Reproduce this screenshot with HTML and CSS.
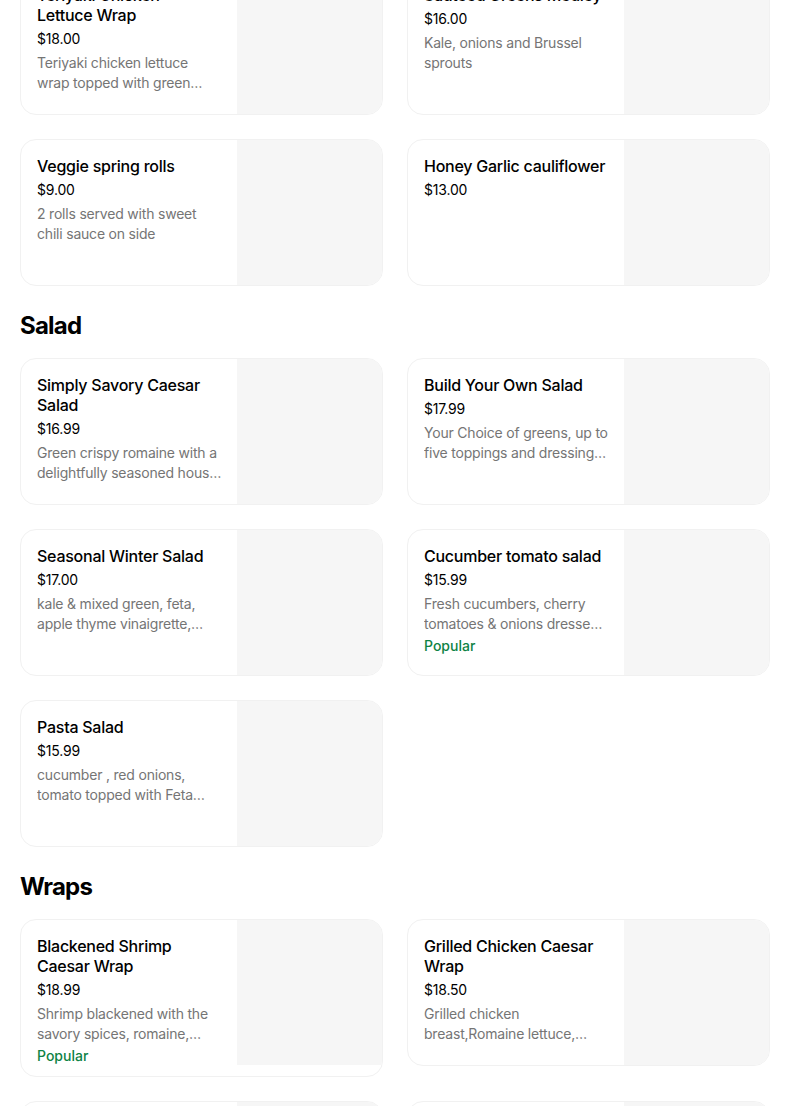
FILE: index.html
```html
<!DOCTYPE html>
<html lang="en">
<head>
<meta charset="utf-8">
<title>Menu</title>
<link rel="stylesheet" href="styles.css">
</head>
<body>
<main class="menu">
  <section class="section section-first">
    <div class="grid">
      <article class="card">
        <div class="info">
          <h3 class="title">Teriyaki Chicken Lettuce&nbsp;Wrap</h3>
          <div class="price">$18.00</div>
          <p class="desc">Teriyaki chicken lettuce wrap topped with green onions and sesame seeds</p>
        </div>
        <div class="thumb"></div>
      </article>
      <article class="card">
        <div class="info">
          <h3 class="title">Sauteed Greens Medley</h3>
          <div class="price">$16.00</div>
          <p class="desc">Kale, onions and Brussel sprouts</p>
        </div>
        <div class="thumb"></div>
      </article>
      <article class="card">
        <div class="info">
          <h3 class="title">Veggie spring rolls</h3>
          <div class="price">$9.00</div>
          <p class="desc">2 rolls served with sweet chili sauce on side</p>
        </div>
        <div class="thumb"></div>
      </article>
      <article class="card">
        <div class="info">
          <h3 class="title">Honey Garlic cauliflower</h3>
          <div class="price">$13.00</div>
        </div>
        <div class="thumb"></div>
      </article>
    </div>
  </section>

  <section class="section">
    <h2 class="heading">Salad</h2>
    <div class="grid">
      <article class="card">
        <div class="info">
          <h3 class="title">Simply Savory Caesar Salad</h3>
          <div class="price">$16.99</div>
          <p class="desc">Green crispy romaine with a delightfully seasoned house made caesar dressing</p>
        </div>
        <div class="thumb"></div>
      </article>
      <article class="card">
        <div class="info">
          <h3 class="title">Build Your Own Salad</h3>
          <div class="price">$17.99</div>
          <p class="desc">Your Choice of greens, up to five toppings and dressing. Protein extra</p>
        </div>
        <div class="thumb"></div>
      </article>
      <article class="card">
        <div class="info">
          <h3 class="title">Seasonal Winter Salad</h3>
          <div class="price">$17.00</div>
          <p class="desc">kale &amp; mixed green, feta, apple thyme vinaigrette, candied pecans</p>
        </div>
        <div class="thumb"></div>
      </article>
      <article class="card">
        <div class="info">
          <h3 class="title">Cucumber tomato salad</h3>
          <div class="price">$15.99</div>
          <p class="desc">Fresh cucumbers, cherry tomatoes &amp; onions dressed with olive oil</p>
          <div class="badge">Popular</div>
        </div>
        <div class="thumb"></div>
      </article>
      <article class="card">
        <div class="info">
          <h3 class="title">Pasta Salad</h3>
          <div class="price">$15.99</div>
          <p class="desc">cucumber , red onions, tomato topped with Feta cheese and olives</p>
        </div>
        <div class="thumb"></div>
      </article>
    </div>
  </section>

  <section class="section">
    <h2 class="heading">Wraps</h2>
    <div class="grid">
      <article class="card">
        <div class="info">
          <h3 class="title">Blackened Shrimp Caesar Wrap</h3>
          <div class="price">$18.99</div>
          <p class="desc">Shrimp blackened with the savory spices, romaine, parmesan and caesar dressing</p>
          <div class="badge">Popular</div>
        </div>
        <div class="thumb"></div>
      </article>
      <article class="card">
        <div class="info">
          <h3 class="title">Grilled Chicken Caesar Wrap</h3>
          <div class="price">$18.50</div>
          <p class="desc">Grilled chicken breast,Romaine lettuce, parmesan cheese and caesar dressing</p>
        </div>
        <div class="thumb"></div>
      </article>
      <article class="card">
        <div class="info">
          <h3 class="title">Falafel Wrap</h3>
          <div class="price">$15.99</div>
          <p class="desc">Falafel, hummus, lettuce, tomato and tahini</p>
        </div>
        <div class="thumb"></div>
      </article>
      <article class="card">
        <div class="info">
          <h3 class="title">Turkey Club Wrap</h3>
          <div class="price">$16.99</div>
          <p class="desc">Turkey, bacon, lettuce, tomato and mayo</p>
        </div>
        <div class="thumb"></div>
      </article>
    </div>
  </section>
</main>
</body>
</html>
```

FILE: styles.css
```css
* {
  box-sizing: border-box;
}

html, body {
  margin: 0;
  padding: 0;
  background: #ffffff;
}

body {
  font-family: Inter, "Noto Sans", "Liberation Sans", sans-serif;
  color: #000000;
  overflow: hidden;
}

.menu {
  width: 790px;
  padding: 0 20px;
}

.section {
  margin-top: 24px;
}

.section-first {
  margin-top: -32px;
}

.heading {
  margin: 0 0 16px 0;
  font-size: 24px;
  line-height: 32px;
  font-weight: 700;
  letter-spacing: -0.8px;
}

.grid {
  display: grid;
  grid-template-columns: 363px 363px;
  column-gap: 24px;
  row-gap: 24px;
  align-items: start;
}

.card {
  display: flex;
  border: 1px solid #f1f1f1;
  border-radius: 16px;
  overflow: hidden;
  background: #ffffff;
}

.info {
  flex: 1;
  min-width: 0;
  padding: 16px 15px 10px 16px;
}

.thumb {
  width: 145px;
  height: 145px;
  flex-shrink: 0;
  background: #f6f6f6;
}

.title {
  margin: 0;
  font-size: 16px;
  line-height: 20px;
  font-weight: 500;
  letter-spacing: -0.25px;
  color: #000000;
}

.price {
  margin-top: 4px;
  font-size: 14px;
  line-height: 20px;
  letter-spacing: -0.2px;
  color: #000000;
}

.desc {
  margin: 4px 0 0 0;
  font-size: 14px;
  line-height: 20px;
  letter-spacing: -0.2px;
  color: #757575;
  display: -webkit-box;
  -webkit-line-clamp: 2;
  -webkit-box-orient: vertical;
  overflow: hidden;
}

.badge {
  margin-top: 2px;
  font-size: 14px;
  line-height: 20px;
  font-weight: 500;
  color: #0e8345;
}
```
